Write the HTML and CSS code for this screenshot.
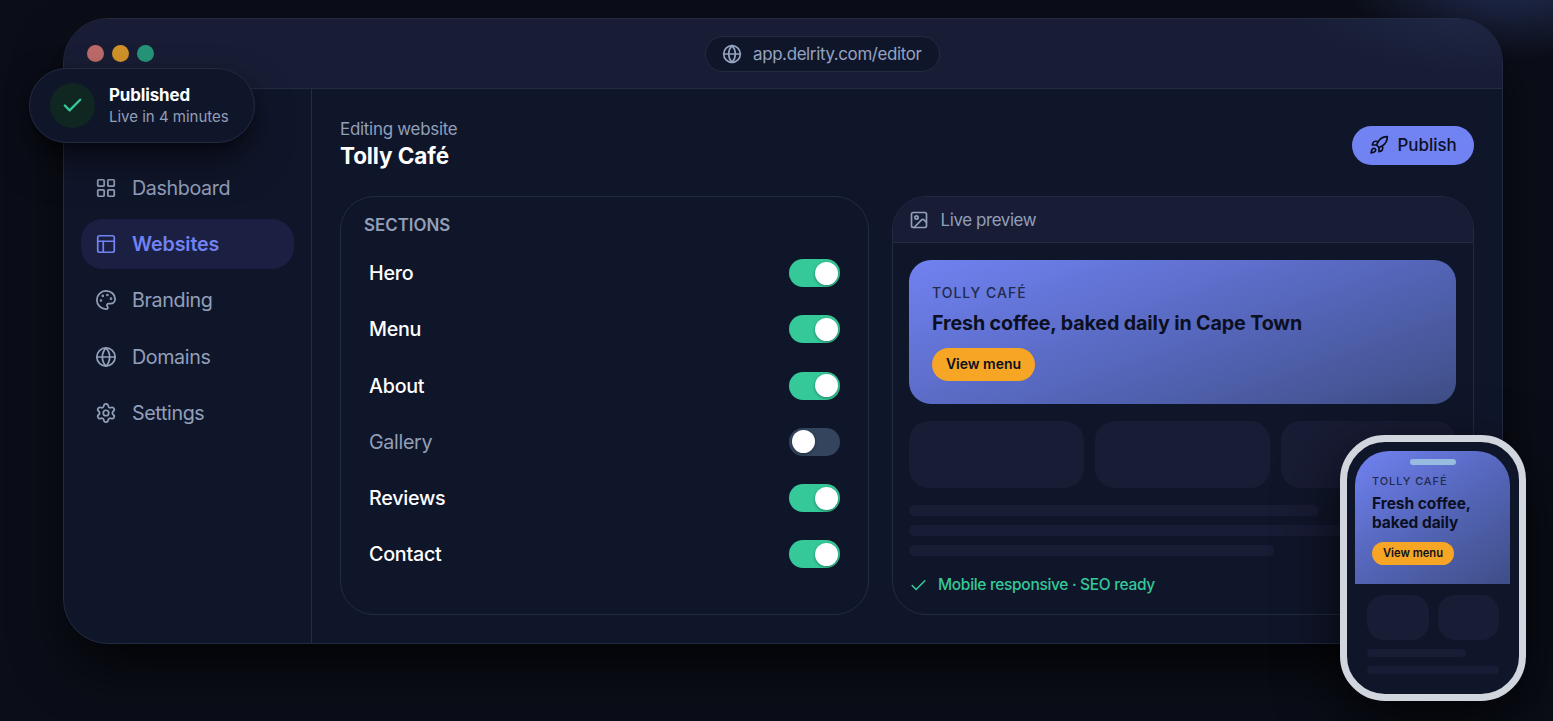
FILE: index.html
```html
<!DOCTYPE html>
<html lang="en">
<head>
  <meta charset="UTF-8">
  <meta name="viewport" content="width=device-width, initial-scale=1.0">
  <title>Delrity Editor</title>
  <link rel="stylesheet" href="styles.css">
</head>

<body>
  <div class="stage">
    <div class="window">
      <div class="titlebar">
        <div class="dots">
          <span class="dot red"></span>
          <span class="dot amber"></span>
          <span class="dot green"></span>
        </div>
        <div class="address">
          <svg class="icon" width="20" height="20" viewBox="0 0 24 24"><circle cx="12" cy="12" r="10"/><path d="M12 2a14.5 14.5 0 0 0 0 20 14.5 14.5 0 0 0 0-20"/><path d="M2 12h20"/></svg>
          <span>app.delrity.com/editor</span>
        </div>
      </div>

      <div class="body">
        <nav class="sidebar">
          <a class="nav-item">
            <svg class="icon" width="22" height="22" viewBox="0 0 24 24"><rect width="7" height="7" x="3" y="3" rx="1"/><rect width="7" height="7" x="14" y="3" rx="1"/><rect width="7" height="7" x="14" y="14" rx="1"/><rect width="7" height="7" x="3" y="14" rx="1"/></svg>
            <span>Dashboard</span>
          </a>
          <a class="nav-item active">
            <svg class="icon" width="22" height="22" viewBox="0 0 24 24"><rect width="18" height="18" x="3" y="3" rx="2"/><path d="M3 9h18"/><path d="M9 21V9"/></svg>
            <span>Websites</span>
          </a>
          <a class="nav-item">
            <svg class="icon" width="22" height="22" viewBox="0 0 24 24"><path d="M12 22a1 1 0 0 1 0-20 10 9 0 0 1 10 9 5 5 0 0 1-5 5h-2.25a1.75 1.75 0 0 0-1.4 2.8l.3.4a1.75 1.75 0 0 1-1.4 2.8z"/><circle cx="13.5" cy="6.5" r=".5" fill="currentColor"/><circle cx="17.5" cy="10.5" r=".5" fill="currentColor"/><circle cx="6.5" cy="12.5" r=".5" fill="currentColor"/><circle cx="8.5" cy="7.5" r=".5" fill="currentColor"/></svg>
            <span>Branding</span>
          </a>
          <a class="nav-item">
            <svg class="icon" width="22" height="22" viewBox="0 0 24 24"><circle cx="12" cy="12" r="10"/><path d="M12 2a14.5 14.5 0 0 0 0 20 14.5 14.5 0 0 0 0-20"/><path d="M2 12h20"/></svg>
            <span>Domains</span>
          </a>
          <a class="nav-item">
            <svg class="icon" width="22" height="22" viewBox="0 0 24 24"><path d="M9.671 4.136a2.34 2.34 0 0 1 4.659 0 2.34 2.34 0 0 0 3.319 1.915 2.34 2.34 0 0 1 2.33 4.033 2.34 2.34 0 0 0 0 3.831 2.34 2.34 0 0 1-2.33 4.033 2.34 2.34 0 0 0-3.319 1.915 2.34 2.34 0 0 1-4.659 0 2.34 2.34 0 0 0-3.32-1.915 2.34 2.34 0 0 1-2.33-4.033 2.34 2.34 0 0 0 0-3.831A2.34 2.34 0 0 1 6.35 6.051a2.34 2.34 0 0 0 3.319-1.915"/><circle cx="12" cy="12" r="3"/></svg>
            <span>Settings</span>
          </a>
        </nav>

        <main class="main">
          <header class="header">
            <div class="heading">
              <div class="eyebrow">Editing website</div>
              <h1 class="site-name">Tolly Café</h1>
            </div>
            <button class="publish">
              <svg class="icon" width="20" height="20" viewBox="0 0 24 24"><path d="M4.5 16.5c-1.5 1.26-2 5-2 5s3.74-.5 5-2c.71-.84.7-2.13-.09-2.91a2.18 2.18 0 0 0-2.91-.09z"/><path d="m12 15-3-3a22 22 0 0 1 2-3.95A12.88 12.88 0 0 1 22 2c0 2.72-.78 7.5-6 11a22.35 22.35 0 0 1-4 2z"/><path d="M9 12H4s.55-3.03 2-4c1.62-1.08 5 0 5 0"/><path d="M12 15v5s3.03-.55 4-2c1.08-1.62 0-5 0-5"/></svg>
              <span>Publish</span>
            </button>
          </header>

          <div class="panels">
            <section class="card sections">
              <h2 class="sections-title">SECTIONS</h2>
              <ul class="rows">
                <li class="row"><span>Hero</span><i class="toggle on"></i></li>
                <li class="row"><span>Menu</span><i class="toggle on"></i></li>
                <li class="row"><span>About</span><i class="toggle on"></i></li>
                <li class="row off"><span>Gallery</span><i class="toggle"></i></li>
                <li class="row"><span>Reviews</span><i class="toggle on"></i></li>
                <li class="row"><span>Contact</span><i class="toggle on"></i></li>
              </ul>
            </section>

            <section class="card preview">
              <div class="preview-head">
                <svg class="icon" width="20" height="20" viewBox="0 0 24 24"><rect width="18" height="18" x="3" y="3" rx="2"/><circle cx="9" cy="9" r="2"/><path d="m21 15-3.086-3.086a2 2 0 0 0-2.828 0L6 21"/></svg>
                <span>Live preview</span>
              </div>
              <div class="preview-body">
                <div class="hero">
                  <div class="hero-brand">TOLLY CAFÉ</div>
                  <div class="hero-title">Fresh coffee, baked daily in Cape Town</div>
                  <div class="hero-button">View menu</div>
                </div>
                <div class="tiles">
                  <div class="tile"></div>
                  <div class="tile"></div>
                  <div class="tile"></div>
                </div>
                <div class="lines">
                  <div class="line w-75"></div>
                  <div class="line"></div>
                  <div class="line w-66"></div>
                </div>
                <div class="status">
                  <svg class="icon" width="19" height="19" viewBox="0 0 24 24"><path d="M20 6 9 17l-5-5"/></svg>
                  <span>Mobile responsive · SEO ready</span>
                </div>
              </div>
            </section>
          </div>
        </main>
      </div>
    </div>

    <div class="toast">
      <div class="toast-icon">
        <svg class="icon" width="23" height="23" viewBox="0 0 24 24"><path d="M20 6 9 17l-5-5"/></svg>
      </div>
      <div>
        <div class="toast-title">Published</div>
        <div class="toast-text">Live in 4 minutes</div>
      </div>
    </div>

    <div class="phone">
      <div class="phone-notch"></div>
      <div class="phone-screen">
        <div class="phone-hero">
          <div class="phone-brand">TOLLY CAFÉ</div>
          <div class="phone-title">Fresh coffee,<br>baked daily</div>
          <div class="phone-button">View menu</div>
        </div>
        <div class="phone-body">
          <div class="phone-tiles">
            <div class="phone-tile"></div>
            <div class="phone-tile"></div>
          </div>
          <div class="phone-line w-75"></div>
          <div class="phone-line"></div>
        </div>
      </div>
    </div>
  </div>
</body>
</html>
```

FILE: styles.css
```css
* {
  box-sizing: border-box;
}

body {
  margin: 0;
  height: 721px;
  overflow: hidden;
  background:
    radial-gradient(ellipse 170px 85px at 1510px -25px, #232e55 0%, rgba(35, 46, 85, 0) 100%),
    #0b0e18;
  color: #fff;
  font-family: Inter, sans-serif;
}

h1,
h2,
ul {
  margin: 0;
  padding: 0;
  list-style: none;
}

.icon {
  display: block;
  flex: none;
  fill: none;
  stroke: currentColor;
  stroke-width: 2;
  stroke-linecap: round;
  stroke-linejoin: round;
}

.stage {
  position: relative;
  height: 721px;
  padding: 18px 50px 0 63px;
}

/* browser window */
.window {
  display: flex;
  flex-direction: column;
  height: 626px;
  overflow: hidden;
  background: #10162a;
  border: 1px solid #232b43;
  border-radius: 45px;
  box-shadow: 0 28px 56px -8px rgba(0, 0, 0, 0.8);
}

.titlebar {
  display: flex;
  align-items: center;
  height: 70px;
  flex: none;
  padding: 0 23px;
  background:
    radial-gradient(ellipse 200px 80px at 1420px -25px, #202a4a 0%, rgba(32, 42, 74, 0) 100%),
    #181d35;
  border-bottom: 1px solid #232b43;
}

.dots {
  display: flex;
  gap: 8px;
  margin-right: 12px;
}

.dot {
  width: 17px;
  height: 17px;
  border-radius: 50%;
}

.dot.red {
  background: #bb6a68;
}

.dot.amber {
  background: #cf9128;
}

.dot.green {
  background: #269477;
}

.address {
  display: flex;
  align-items: center;
  gap: 11px;
  width: 235px;
  height: 36px;
  margin: 0 auto;
  padding: 0 16px;
  background: #10162a;
  border: 1px solid #232b43;
  border-radius: 18px;
  color: #94a3c0;
  font-size: 16.9px;
  letter-spacing: -0.35px;
}

.body {
  display: flex;
  flex: 1;
}

.sidebar {
  display: flex;
  flex-direction: column;
  gap: 6.2px;
  width: 248px;
  padding: 74px 17px 0;
  border-right: 1px solid #232b43;
}

.nav-item {
  display: flex;
  align-items: center;
  gap: 15px;
  height: 50px;
  padding-left: 14px;
  border-radius: 22px;
  color: #929fb9;
  font-size: 19.7px;
  letter-spacing: -0.38px;
}

.nav-item .icon {
  stroke-width: 1.9;
}

.nav-item.active {
  background: #1b2043;
  color: #7182f2;
  font-weight: 600;
  letter-spacing: -0.12px;
}

.main {
  flex: 1;
  padding: 28px 28px 0;
}

.header {
  display: flex;
  justify-content: space-between;
  align-items: center;
  height: 56px;
  margin-bottom: 23px;
}

.heading {
  padding-bottom: 2px;
}

.eyebrow {
  color: #929fb9;
  font-size: 16.9px;
  letter-spacing: -0.25px;
  line-height: 24px;
}

.site-name {
  font-size: 22.5px;
  font-weight: 700;
  letter-spacing: -0.1px;
  line-height: 30px;
}

.publish {
  display: flex;
  align-items: center;
  gap: 8.5px;
  width: 122px;
  height: 39px;
  padding: 0 17px;
  background: #7182f2;
  border: none;
  border-radius: 20px;
  color: #0b0f1f;
  font-family: inherit;
  font-size: 16.9px;
  font-weight: 500;
}

.panels {
  display: flex;
  gap: 23px;
  height: 419px;
}

.card {
  border: 1px solid #232b43;
  border-radius: 34px;
  overflow: hidden;
}

.sections {
  width: 529px;
  padding: 16px 28px 0;
}

.sections-title {
  margin-left: -5px;
  color: #929fb9;
  font-size: 16.9px;
  font-weight: 600;
  line-height: 24px;
}

.rows {
  margin-top: 8px;
}

.row {
  display: flex;
  justify-content: space-between;
  align-items: center;
  height: 56.25px;
  font-size: 19.7px;
  font-weight: 500;
  letter-spacing: -0.25px;
}

.row.off {
  color: #929fb9;
  font-weight: 400;
  letter-spacing: -0.35px;
}

.toggle {
  display: flex;
  align-items: center;
  width: 51px;
  height: 28px;
  padding: 0 2px 0 3px;
  background: #33445c;
  border-radius: 14px;
}

.toggle::before {
  content: "";
  width: 23px;
  height: 23px;
  background: #fff;
  border-radius: 50%;
  box-shadow: 0 1px 3px rgba(0, 0, 0, 0.35);
}

.toggle.on {
  justify-content: flex-end;
  background: #35c899;
}

.preview {
  flex: 1;
}

.preview-head {
  display: flex;
  align-items: center;
  gap: 11.5px;
  height: 46px;
  padding: 1px 16px 0;
  background: #181d35;
  border-bottom: 1px solid #232b43;
  color: #929fb9;
  font-size: 16.9px;
  letter-spacing: -0.38px;
}

.preview-body {
  padding: 17px 17px 0 16px;
}

.hero {
  height: 144px;
  padding: 23px;
  background: linear-gradient(160deg, #7182f2 0%, #5768bf 50%, #3f4e86 100%);
  border-radius: 22px;
  color: #0b0f1f;
}

.hero-brand {
  color: #1f2a4c;
  font-size: 14px;
  font-weight: 500;
  letter-spacing: 1px;
  line-height: 20px;
}

.hero-title {
  margin-top: 6px;
  font-size: 19.7px;
  font-weight: 700;
  letter-spacing: -0.13px;
  line-height: 28px;
}

.hero-button {
  display: flex;
  align-items: center;
  justify-content: center;
  width: 103px;
  height: 33px;
  margin-top: 11px;
  padding-bottom: 2px;
  background: #f7a524;
  border-radius: 17px;
  font-size: 14px;
  font-weight: 600;
}

.tiles {
  display: flex;
  gap: 11px;
  margin-top: 17px;
}

.tile {
  flex: 1;
  height: 67px;
  background: #181c34;
  border-radius: 20px;
}

.lines {
  display: flex;
  flex-direction: column;
  gap: 9px;
  margin-top: 17px;
}

.line {
  height: 11px;
  background: #181c34;
  border-radius: 6px;
}

.w-75 {
  width: 75%;
}

.w-66 {
  width: 66.7%;
}

.status {
  display: flex;
  align-items: center;
  gap: 10px;
  margin-top: 17px;
  color: #35c899;
  font-size: 15.5px;
  font-weight: 500;
  letter-spacing: -0.32px;
  line-height: 24px;
}

/* floating notification */
.toast {
  position: absolute;
  left: 29px;
  top: 68px;
  display: flex;
  align-items: center;
  gap: 14px;
  width: 226px;
  height: 75px;
  padding-left: 20px;
  background: #10162a;
  border: 1px solid #232b43;
  border-radius: 38px;
  box-shadow: 0 20px 40px -4px rgba(0, 0, 0, 0.5), 0 6px 14px -4px rgba(0, 0, 0, 0.5);
}

.toast-icon {
  display: flex;
  align-items: center;
  justify-content: center;
  width: 45px;
  height: 45px;
  background: #102621;
  border-radius: 50%;
  color: #35c899;
}

.toast-icon .icon {
  stroke-width: 2.5;
}

.toast-title {
  font-size: 16.9px;
  font-weight: 700;
  letter-spacing: -0.1px;
  line-height: 22px;
}

.toast-text {
  color: #929fb9;
  font-size: 15px;
  line-height: 21px;
}

/* phone mockup */
.phone {
  position: absolute;
  left: 1340px;
  top: 435px;
  width: 186px;
  height: 266px;
  padding: 9px 9px 9px 8px;
  background: #10162a;
  border: 7px solid #d1d5de;
  border-radius: 45px;
  box-shadow: 0 20px 60px rgba(0, 0, 0, 0.75);
}

.phone-notch {
  position: absolute;
  left: 63px;
  top: 17px;
  width: 46px;
  height: 6px;
  background: #98bce0;
  border-radius: 3px;
}

.phone-screen {
  height: 234px;
  overflow: hidden;
  border-radius: 34px;
}

.phone-hero {
  height: 133px;
  padding: 21px 17px 0;
  background: linear-gradient(145deg, #7182f2 0%, #5768bf 45%, #3f4e86 100%);
  color: #0b0f1f;
}

.phone-brand {
  color: #1f2a4c;
  font-size: 11px;
  font-weight: 500;
  letter-spacing: 0.9px;
  line-height: 18px;
}

.phone-title {
  margin-top: 4px;
  font-size: 15.5px;
  font-weight: 700;
  letter-spacing: -0.05px;
  line-height: 19px;
}

.phone-button {
  display: flex;
  align-items: center;
  justify-content: center;
  width: 82px;
  height: 23px;
  margin-top: 10px;
  padding-bottom: 1px;
  background: #f7a524;
  border-radius: 12px;
  font-size: 11.2px;
  font-weight: 600;
}

.phone-body {
  padding: 11px 11px 0 12px;
}

.phone-tiles {
  display: flex;
  gap: 9px;
}

.phone-tile {
  flex: 1;
  height: 45px;
  background: #181c34;
  border-radius: 17px;
}

.phone-line {
  height: 8px;
  margin-top: 9px;
  background: #181c34;
  border-radius: 4px;
}
```
